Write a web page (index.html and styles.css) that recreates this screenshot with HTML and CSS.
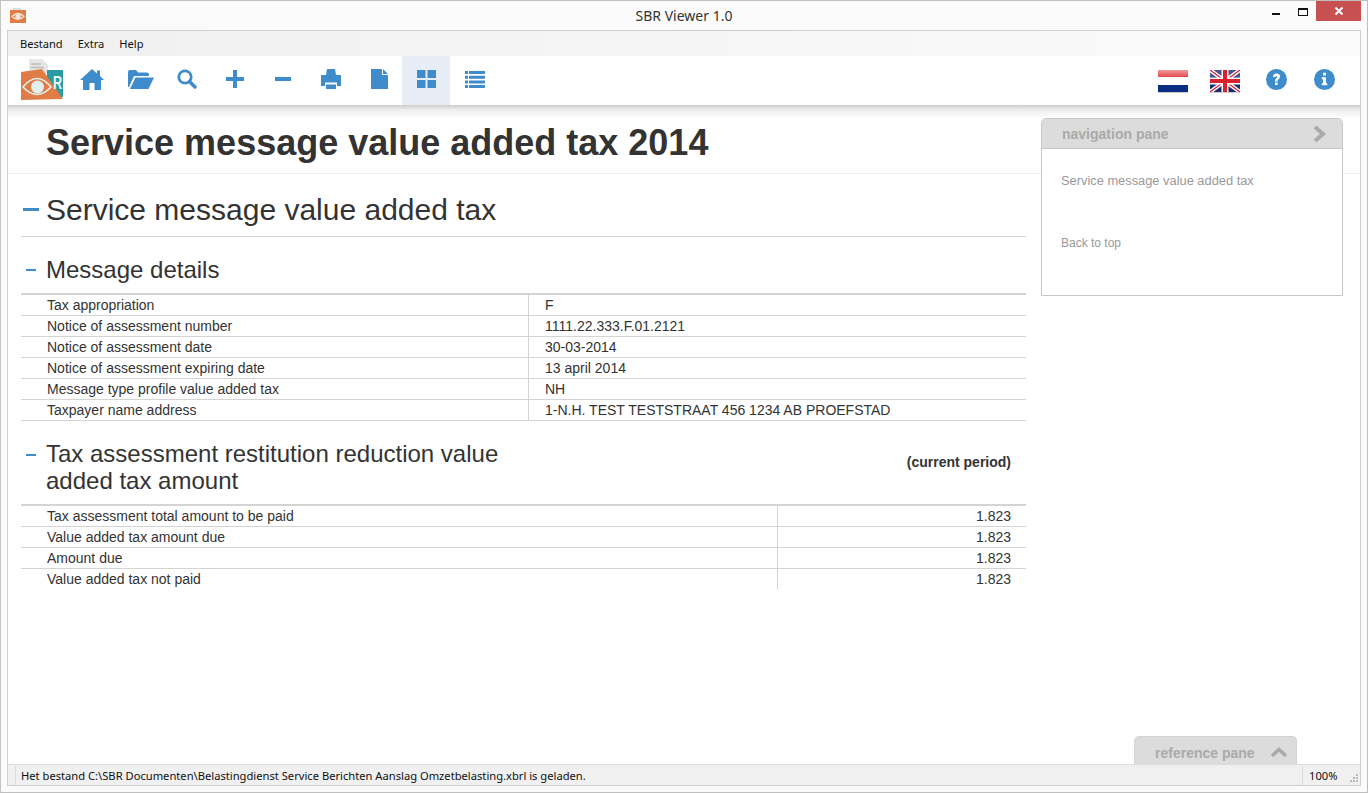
FILE: index.html
```html
<!DOCTYPE html>
<html lang="en">
<head>
<meta charset="UTF-8" />
<title>SBR Viewer 1.0</title>
<link rel="stylesheet" href="styles.css">
</head>
<body>
<div class="window">

  <div class="titlebar">
    <svg class="app-icon" width="16" height="16" viewBox="0 0 16 16">
      <rect x="3" y="0" width="8" height="3" fill="#ddd"/>
      <rect y="2" width="16" height="13" fill="#e07c45"/>
      <path d="M2 8.5 Q8 2.5 14 8.5 Q8 14 2 8.5Z" fill="none" stroke="#f3e6dc" stroke-width="1.2"/>
      <circle cx="8" cy="8.5" r="2.6" fill="#f3e6dc"/>
    </svg>
    <div class="title">SBR Viewer 1.0</div>
    <div class="winbtns">
      <span class="btn-min"></span>
      <span class="btn-max"></span>
      <span class="btn-close">
        <svg width="10" height="10" viewBox="0 0 10 10"><path d="M1.5 1.5 L8.5 8.5 M8.5 1.5 L1.5 8.5" stroke="#fff" stroke-width="2"/></svg>
      </span>
    </div>
  </div>

  <div class="frame">
    <div class="menubar">
      <span>Bestand</span>
      <span>Extra</span>
      <span>Help</span>
    </div>

    <div class="toolbar">
      <svg class="logo" width="44" height="46" viewBox="0 0 44 46">
        <path d="M9 1 H22 L28 7 V16 H9Z" fill="#e6e6e6"/>
        <path d="M11 6 H21 M11 9.500 H24" stroke="#bdbdbd" stroke-width="1.500"/>
        <rect x="27" y="12" width="16" height="27" fill="#2a9aa5"/>
        <path d="M1 14 L22 11 L43 41 L1 42Z" fill="#e07c45"/>
        <path d="M3 29 Q17 12 31 29 Q17 44 3 29Z" fill="none" stroke="#dff0ee" stroke-width="1.600"/>
        <circle cx="17.500" cy="29" r="6.500" fill="#dff0ee"/>
        <text class="logo-r" transform="translate(33 31) scale(0.7 1)">R</text>
      </svg>
      <div class="tool nudge-home">
        <svg width="24" height="21" viewBox="0 0 24 21"><path d="M12 0 L17 4.500 V1.500 H20 V7 L24 11 H21 V21 H14.500 V14 H9.500 V21 H3 V11 H0Z" fill="#3f8ccd"/></svg>
      </div>
      <div class="tool nudge-folder">
        <svg width="26" height="19" viewBox="0 0 26 19"><path d="M0 17 V2 Q0 0 2 0 H8 L10 2.500 H19 Q21 2.500 21 4.500 V6 H6 L1 17Z M2 19 L7.500 7.500 H26 L20.500 19Z" fill="#3f8ccd"/></svg>
      </div>
      <div class="tool nudge">
        <svg width="20" height="20" viewBox="0 0 20 20"><circle cx="8" cy="8" r="6.200" fill="none" stroke="#3f8ccd" stroke-width="2.800"/><path d="M12.500 12.500 L18 18" stroke="#3f8ccd" stroke-width="3.500" stroke-linecap="round"/></svg>
      </div>
      <div class="tool nudge">
        <svg width="18" height="18" viewBox="0 0 18 18"><path d="M7 0 H11 V7 H18 V11 H11 V18 H7 V11 H0 V7 H7Z" fill="#3f8ccd"/></svg>
      </div>
      <div class="tool nudge">
        <svg width="16" height="4" viewBox="0 0 16 4"><rect width="16" height="4" fill="#3f8ccd"/></svg>
      </div>
      <div class="tool nudge">
        <svg width="20" height="20" viewBox="0 0 20 20"><path d="M6 0 H14 L15 6 H20 V17 H16 V13.500 H4 V17 H0 V6 H5Z M5 15.500 H15 V20 H5Z" fill="#3f8ccd"/></svg>
      </div>
      <div class="tool nudge">
        <svg width="17" height="20" viewBox="0 0 17 20"><path d="M0 0 H11 V6 H17 V20 H0Z M12 0 L17 5 H12Z" fill="#3f8ccd"/></svg>
      </div>
      <div class="tool active">
        <svg width="19" height="18" viewBox="0 0 19 18"><path d="M0 0 H8.500 V8 H0Z M10.500 0 H19 V8 H10.500Z M0 10 H8.500 V18 H0Z M10.500 10 H19 V18 H10.500Z" fill="#3f8ccd"/></svg>
      </div>
      <div class="tool nudge">
        <svg width="20" height="17" viewBox="0 0 20 17"><path d="M0 0 H3 V3 H0Z M4 0 H20 V3 H4Z M0 4.700 H3 V7.700 H0Z M4 4.700 H20 V7.700 H4Z M0 9.400 H3 V12.400 H0Z M4 9.400 H20 V12.400 H4Z M0 14 H3 V17 H0Z M4 14 H20 V17 H4Z" fill="#3f8ccd"/></svg>
      </div>

      <div class="toolbar-right">
        <div class="tool flag flag-nl">
          <svg width="30" height="23" viewBox="0 0 30 23">
            <defs>
              <linearGradient id="nlTop" x1="0" y1="0" x2="0" y2="1">
                <stop offset="0" stop-color="#f19a9c"/>
                <stop offset="1" stop-color="#e4474d"/>
              </linearGradient>
            </defs>
            <rect width="30" height="7" fill="url(#nlTop)"/>
            <rect y="7" width="30" height="8" fill="#fff"/>
            <rect y="15" width="30" height="7" fill="#0b2d84"/>
            <rect y="22" width="30" height="1" fill="#ccc"/>
          </svg>
        </div>
        <div class="tool flag flag-uk">
          <svg width="30" height="23" viewBox="0 0 30 23">
            <rect width="30" height="22" fill="#1c2a6e"/>
            <rect width="30" height="7" fill="#fff" opacity="0.2"/>
            <path d="M0 0 L30 22 M30 0 L0 22" stroke="#fff" stroke-width="4"/>
            <path d="M0 0 L30 22 M30 0 L0 22" stroke="#d8202f" stroke-width="1.300"/>
            <path d="M15 0 V22 M0 11 H30" stroke="#fff" stroke-width="7"/>
            <path d="M15 0 V22 M0 11 H30" stroke="#d8202f" stroke-width="4"/>
            <rect y="22" width="30" height="1" fill="#ccc"/>
          </svg>
        </div>
        <div class="tool">
          <svg width="21" height="21" viewBox="0 0 21 21">
            <circle cx="10.500" cy="10.500" r="10.500" fill="#3f8ccd"/>
            <path d="M7 8 Q7 4.500 10.500 4.500 Q14 4.500 14 7.700 Q14 9.500 12.300 10.500 Q11.500 11 11.500 12.500 H9 Q9 10 10.500 9 Q11.300 8.500 11.300 7.700 Q11.300 6.900 10.500 6.900 Q9.600 6.900 9.600 8Z M9 13.500 H11.600 V16 H9Z" fill="#fff"/>
          </svg>
        </div>
        <div class="tool">
          <svg width="21" height="21" viewBox="0 0 21 21">
            <circle cx="10.500" cy="10.500" r="10.500" fill="#3f8ccd"/>
            <path d="M9 3.800 H12 V6.500 H9Z M7.800 8.300 H12 V14.200 H13.300 V16.300 H7.800 V14.200 H9 V10.300 H7.800Z" fill="#fff"/>
          </svg>
        </div>
      </div>
    </div>

    <div class="content">
      <h1 class="doc-title">Service message value added tax 2014</h1>

      <div class="doc-body">
        <div class="section-head">
          <span class="toggle toggle-big"></span>
          <h2>Service message value added tax</h2>
        </div>

        <div class="sub-head">
          <span class="toggle"></span>
          <h3>Message details</h3>
        </div>
        <table class="data details">
          <tr><td>Tax appropriation</td><td>F</td></tr>
          <tr><td>Notice of assessment number</td><td>1111.22.333.F.01.2121</td></tr>
          <tr><td>Notice of assessment date</td><td>30-03-2014</td></tr>
          <tr><td>Notice of assessment expiring date</td><td>13 april 2014</td></tr>
          <tr><td>Message type profile value added tax</td><td>NH</td></tr>
          <tr><td>Taxpayer name address</td><td>1-N.H. TEST TESTSTRAAT 456 1234 AB PROEFSTAD</td></tr>
        </table>

        <div class="sub-head amounts-head">
          <span class="toggle"></span>
          <h3>Tax assessment restitution reduction value added tax amount</h3>
          <div class="period">(current period)</div>
        </div>
        <table class="data amounts">
          <tr><td>Tax assessment total amount to be paid</td><td>1.823</td></tr>
          <tr><td>Value added tax amount due</td><td>1.823</td></tr>
          <tr><td>Amount due</td><td>1.823</td></tr>
          <tr><td>Value added tax not paid</td><td>1.823</td></tr>
        </table>
      </div>

      <div class="nav-pane">
        <div class="pane-head">
          <span>navigation pane</span>
          <svg width="13" height="16" viewBox="0 0 13 16"><path d="M2 1 L10 8 L2 15" fill="none" stroke="#aaa" stroke-width="4"/></svg>
        </div>
        <div class="pane-body">
          <div class="nav-link">Service message value added tax</div>
          <div class="nav-link back">Back to top</div>
        </div>
      </div>

      <div class="ref-pane">
        <span>reference pane</span>
        <svg width="16" height="11" viewBox="0 0 16 11"><path d="M1 9 L8 2.500 L15 9" fill="none" stroke="#aaa" stroke-width="3.600"/></svg>
      </div>
    </div>

    <div class="statusbar">
      <div class="status-text">Het bestand C:\SBR Documenten\Belastingdienst Service Berichten Aanslag Omzetbelasting.xbrl is geladen.</div>
      <div class="status-zoom">100%</div>
      <svg class="grip" width="9" height="9" viewBox="0 0 9 9"><path d="M7 0 H9 V2 H7Z M4 3 H6 V5 H4Z M7 3 H9 V5 H7Z M1 6 H3 V8 H1Z M4 6 H6 V8 H4Z M7 6 H9 V8 H7Z" fill="#bbb"/></svg>
    </div>
  </div>
</div>
</body>
</html>
```

FILE: styles.css
```css
html, body {
  margin: 0;
  height: 793px;
  overflow: hidden;
  background: #fff;
}
.window {
  box-sizing: border-box;
  height: 793px;
  display: flex;
  flex-direction: column;
  padding: 0 6px 6px 6px;
  background: #fbfbfb;
  border: 1px solid #bfbfbf;
  border-left-width: 2px;
  border-left-color: #c4c4c4;
  margin-left: -1px;
  font-family: "Liberation Sans", Arial, sans-serif;
}
.titlebar {
  height: 29px;
  flex: none;
  position: relative;
  display: flex;
  justify-content: center;
}
.app-icon {
  position: absolute;
  left: 3px;
  top: 7px;
}
.title {
  font-family: "Noto Sans", sans-serif;
  font-size: 14px;
  color: #333;
  line-height: 29px;
}
.winbtns {
  position: absolute;
  right: 0;
  top: 0;
  display: flex;
}
.btn-min {
  position: absolute;
  right: 81px;
  top: 12px;
  width: 8px;
  height: 2px;
  background: #111;
}
.btn-max {
  position: absolute;
  right: 53px;
  top: 7px;
  box-sizing: border-box;
  width: 10px;
  height: 8px;
  border: 1px solid #111;
  border-top-width: 2px;
}
.btn-close {
  width: 45px;
  height: 20px;
  background: #c75050;
  display: flex;
  align-items: center;
  justify-content: center;
}
.frame {
  flex: 1;
  min-height: 0;
  display: flex;
  flex-direction: column;
  border: 1px solid #cfcfcf;
  background: #fff;
}
.menubar {
  height: 25px;
  flex: none;
  display: flex;
  align-items: center;
  gap: 15px;
  padding-left: 12px;
  background: linear-gradient(to right, #f0f0f0, #fbfbfb);
  font-family: "Noto Sans", sans-serif;
  font-size: 11.100px;
  color: #111;
}
.toolbar {
  height: 49px;
  flex: none;
  display: flex;
  background: #fff;
  padding-left: 12px;
}
.logo {
  margin-right: 2px;
  margin-top: 2px;
}
.logo-r {
  font-family: "Liberation Sans", sans-serif;
  font-weight: bold;
  font-size: 18px;
  fill: #e8f5f5;
}
.tool {
  box-sizing: border-box;
  width: 48px;
  height: 49px;
  padding-bottom: 3px;
  display: flex;
  align-items: center;
  justify-content: center;
}
.tool.active {
  background: #e6edf4;
}
.nudge svg {
  margin-left: 2px;
}
.nudge-home svg {
  margin-left: 4px;
}
.nudge-folder svg {
  margin-left: 6px;
}
.flag svg {
  margin-top: 4px;
}
.toolbar-right {
  margin-left: auto;
  display: flex;
  padding-right: 12px;
}
.flag-nl {
  margin-right: 4px;
}
.flag-uk {
  margin-right: 3px;
}
.content {
  flex: 1;
  min-height: 0;
  position: relative;
  background: linear-gradient(#cdcdcd, #eeeeee 5px, #fff 13px) no-repeat;
  background-size: 100% 13px;
}
.doc-title {
  margin: 0;
  height: 69px;
  box-sizing: border-box;
  padding: 17px 0 0 38px;
  border-bottom: 1px solid #efefef;
  font-size: 36px;
  line-height: 41px;
  font-weight: bold;
  color: #333;
}
.doc-body {
  width: 1005px;
  margin-left: 13px;
}
.section-head {
  height: 63px;
  box-sizing: border-box;
  padding-top: 9px;
  display: flex;
  align-items: center;
  border-bottom: 1px solid #d4d4d4;
}
h2 {
  margin: 0;
  font-size: 30px;
  font-weight: normal;
  color: #333;
}
h3 {
  margin: 0;
  font-size: 24px;
  line-height: 27px;
  font-weight: normal;
  color: #333;
}
.toggle {
  flex: none;
  display: block;
  width: 10px;
  height: 2px;
  margin: 0 10px 0 5px;
  background: #3f8ccd;
}
.toggle-big {
  width: 16px;
  height: 3px;
  margin: 0 7px 0 2px;
}
.sub-head {
  height: 56px;
  box-sizing: border-box;
  padding-top: 9px;
  display: flex;
  align-items: center;
}
.amounts-head {
  height: 83px;
  padding-top: 0;
  align-items: flex-start;
  position: relative;
}
.amounts-head .toggle {
  margin-top: 33px;
}
.amounts-head h3 {
  width: 470px;
  padding-top: 19px;
}
.period {
  position: absolute;
  right: 15px;
  top: 33px;
  font-size: 14px;
  font-weight: bold;
  color: #333;
}
.data {
  width: 100%;
  border-collapse: collapse;
  table-layout: fixed;
  border-top: 2px solid #d4d4d4;
  font-size: 14px;
  color: #333;
}
.data td {
  height: 20px;
  padding: 0 0 0 26px;
  line-height: 20px;
  border-bottom: 1px solid #d4d4d4;
}
.data td + td {
  border-left: 1px solid #d4d4d4;
}
.details td:first-child {
  width: 481px;
}
.details td + td {
  padding-left: 16px;
}
.amounts td:first-child {
  width: 730px;
}
.amounts td + td {
  padding: 0 15px 0 0;
  text-align: right;
}
.amounts tr:last-child td {
  border-bottom: none;
}
.nav-pane {
  position: absolute;
  z-index: 3;
  left: 1033px;
  top: 13px;
  width: 302px;
  height: 178px;
  box-sizing: border-box;
  border: 1px solid #c8c8c8;
  border-radius: 5px 5px 0 0;
  background: #fff;
}
.pane-head {
  height: 29px;
  display: flex;
  align-items: center;
  justify-content: space-between;
  padding: 0 16px 0 20px;
  background: #dcdcdc;
  border-bottom: 1px solid #c8c8c8;
  border-radius: 4px 4px 0 0;
  font-size: 14px;
  font-weight: bold;
  color: #aaa;
}
.pane-body {
  padding: 24px 19px 0;
  font-size: 12.850px;
  color: #999;
}
.nav-link {
  line-height: 16px;
}
.back {
  margin-top: 46px;
  font-size: 12px;
}
.ref-pane {
  position: absolute;
  left: 1126px;
  bottom: 0;
  width: 163px;
  height: 28px;
  box-sizing: border-box;
  display: flex;
  align-items: center;
  justify-content: space-between;
  padding: 5px 9px 0 20px;
  background: #dcdcdc;
  border: 1px solid #d4d4d4;
  border-bottom: none;
  border-radius: 5px 5px 0 0;
  font-size: 14px;
  font-weight: bold;
  color: #aaa;
}
.ref-pane svg {
  margin-top: -2px;
}
.statusbar {
  height: 20px;
  flex: none;
  position: relative;
  display: flex;
  align-items: center;
  background: #f0f0f0;
  border-top: 1px solid #dcdcdc;
  font-family: "Noto Sans", sans-serif;
  font-size: 11.180px;
  color: #111;
}
.status-text {
  flex: 1;
  margin-left: 7px;
  padding-left: 5px;
  border-left: 1px solid #dcdcdc;
  line-height: 19px;
}
.status-zoom {
  width: 58px;
  box-sizing: border-box;
  padding-left: 6px;
  border-left: 1px solid #dcdcdc;
  line-height: 19px;
}
.grip {
  position: absolute;
  right: 2px;
  bottom: 2px;
}
```
